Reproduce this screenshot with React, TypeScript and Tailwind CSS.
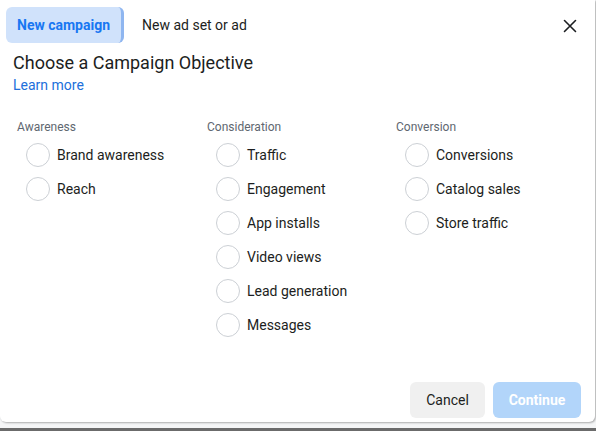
import React from "react";

const columns = [
  { title: "Awareness", width: "w-[190px]", items: ["Brand awareness", "Reach"] },
  {
    title: "Consideration",
    width: "w-[189px]",
    items: ["Traffic", "Engagement", "App installs", "Video views", "Lead generation", "Messages"],
  },
  { title: "Conversion", width: "w-[189px]", items: ["Conversions", "Catalog sales", "Store traffic"] },
];

const Radio = ({ label }: { label: string }) => {
  return (
    <div className="flex items-center h-[34px] pl-[9px]">
      <span className="w-[24px] h-[24px] rounded-full border border-[#ccd0d5] bg-white shrink-0" />
      <span className="ml-[7px] text-[14px] text-[#1c1e21]">{label}</span>
    </div>
  );
};

const App = () => {
  return (
    <div
      className="w-[596px] h-[431px] bg-[#f5f6f7] overflow-hidden flex flex-col"
      style={{ fontFamily: "Roboto, 'Liberation Sans', sans-serif" }}
    >
      <div className="w-[595px] h-[422px] bg-white rounded-b-[6px] flex flex-col shadow-[1px_1px_2px_rgba(0,0,0,0.3)] shrink-0">
        <div className="flex items-center justify-between pt-[7px] pl-[6px] pr-[18px]">
          <div className="flex items-center">
            <div className="h-[36px] px-[11px] flex items-center rounded-[6px] bg-[#d0e2fb] border-r-[3px] border-[#8fb6f0] text-[14px] font-bold text-[#1877f2]">
              New campaign
            </div>
            <div className="ml-[18px] text-[14px] text-[#1c1e21]">New ad set or ad</div>
          </div>
          <svg width="14" height="14" viewBox="0 0 14 14" className="mt-[1px]">
            <path d="M1.5 1.5 L12.5 12.5 M12.5 1.5 L1.5 12.5" stroke="#1c1e21" strokeWidth="1.6" strokeLinecap="round" />
          </svg>
        </div>
        <div className="pl-[13px] mt-[9px] text-[18px] leading-[22px] text-[#1c1e21]">
          Choose a Campaign Objective
        </div>
        <div className="pl-[13px] text-[14px] leading-[18px] text-[#216fdb] mt-[2px]">Learn more</div>
        <div className="flex pl-[17px] mt-[25px]">
          {columns.map((col) => (
            <div key={col.title} className={`${col.width} flex flex-col`}>
              <div className="text-[12px] leading-[16px] text-[#606770]">{col.title}</div>
              <div className="mt-[3px] flex flex-col">
                {col.items.map((item) => (
                  <Radio key={item} label={item} />
                ))}
              </div>
            </div>
          ))}
        </div>
        <div className="mt-auto mb-[4px] flex justify-end gap-[8px] pr-[14px]">
          <button className="h-[36px] w-[75px] rounded-[6px] bg-[#f0f0f0] text-[14px] text-[#1c1e21]">
            Cancel
          </button>
          <button className="h-[36px] w-[88px] rounded-[6px] bg-[#b2d5fa] text-[14px] font-bold text-white">
            Continue
          </button>
        </div>
      </div>
      <div className="mt-[6px] h-[3px] bg-[#6b6b6b]" />
    </div>
  );
};

export default App;
